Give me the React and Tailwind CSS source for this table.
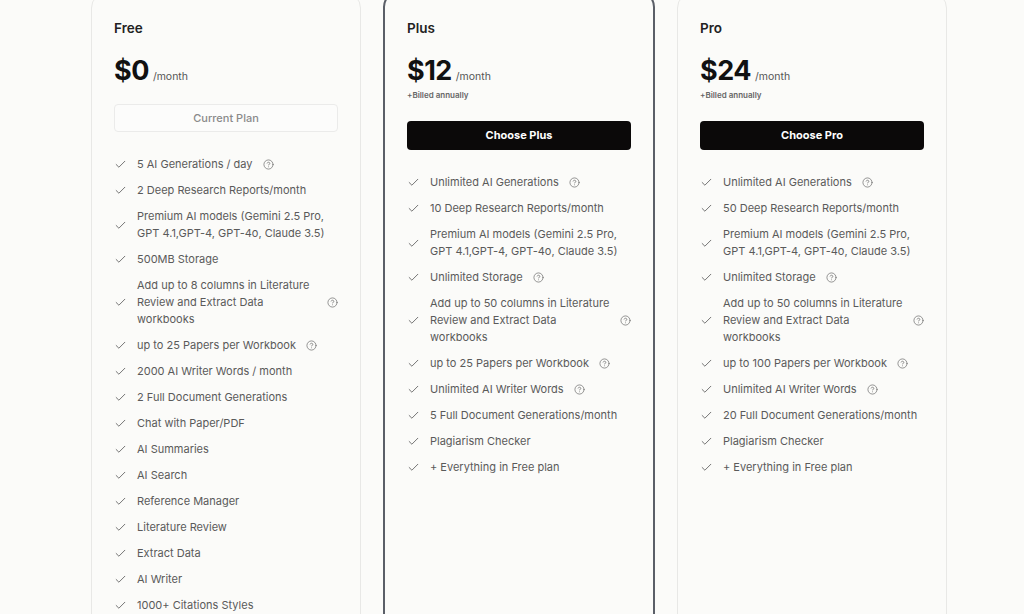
import React from "react";
import { Check, CircleHelp } from "lucide-react";

const plans = [
  {
    name: "Free",
    price: "$0",
    billed: null,
    button: "Current Plan",
    current: true,
    highlight: false,
    features: [
      ["5 AI Generations / day", true],
      ["2 Deep Research Reports/month", false],
      ["Premium AI models (Gemini 2.5 Pro, GPT 4.1,GPT-4, GPT-4o, Claude 3.5)", false],
      ["500MB Storage", false],
      ["Add up to 8 columns in Literature Review and Extract Data workbooks", true],
      ["up to 25 Papers per Workbook", true],
      ["2000 AI Writer Words / month", false],
      ["2 Full Document Generations", false],
      ["Chat with Paper/PDF", false],
      ["AI Summaries", false],
      ["AI Search", false],
      ["Reference Manager", false],
      ["Literature Review", false],
      ["Extract Data", false],
      ["AI Writer", false],
      ["1000+ Citations Styles", false],
    ],
  },
  {
    name: "Plus",
    price: "$12",
    billed: "+Billed annually",
    button: "Choose Plus",
    current: false,
    highlight: true,
    features: [
      ["Unlimited AI Generations", true],
      ["10 Deep Research Reports/month", false],
      ["Premium AI models (Gemini 2.5 Pro, GPT 4.1,GPT-4, GPT-4o, Claude 3.5)", false],
      ["Unlimited Storage", true],
      ["Add up to 50 columns in Literature Review and Extract Data workbooks", true],
      ["up to 25 Papers per Workbook", true],
      ["Unlimited AI Writer Words", true],
      ["5 Full Document Generations/month", false],
      ["Plagiarism Checker", false],
      ["+ Everything in Free plan", false],
    ],
  },
  {
    name: "Pro",
    price: "$24",
    billed: "+Billed annually",
    button: "Choose Pro",
    current: false,
    highlight: false,
    features: [
      ["Unlimited AI Generations", true],
      ["50 Deep Research Reports/month", false],
      ["Premium AI models (Gemini 2.5 Pro, GPT 4.1,GPT-4, GPT-4o, Claude 3.5)", false],
      ["Unlimited Storage", true],
      ["Add up to 50 columns in Literature Review and Extract Data workbooks", true],
      ["up to 100 Papers per Workbook", true],
      ["Unlimited AI Writer Words", true],
      ["20 Full Document Generations/month", false],
      ["Plagiarism Checker", false],
      ["+ Everything in Free plan", false],
    ],
  },
];

function Card({ plan }) {
  return (
    <div
      className={
        "shrink-0 rounded-[16px] bg-[#fbfbf9] px-[22px] pt-[25px] pb-8 min-h-[660px] " +
        (plan.highlight
          ? "w-[272px] mt-[-1px] border-2 border-[#5b5f68]"
          : "w-[270px] border border-[#e8e8e6]")
      }
    >
      <div className="text-[13.5px] leading-[20px] font-semibold text-[#222]">{plan.name}</div>
      <div className="mt-[15px] flex items-baseline h-[36px]">
        <span className="text-[27px] leading-[36px] font-bold text-[#111] tracking-[-0.5px]">{plan.price}</span>
        <span className="ml-[4px] text-[10.5px] text-[#555]">/month</span>
      </div>
      {plan.billed ? (
        <div className="mt-[1px] text-[8px] leading-[10px] font-semibold text-[#666]">{plan.billed}</div>
      ) : null}
      {plan.current ? (
        <div className="mt-[15px] h-[28px] rounded-[4px] border border-[#ebebea] bg-[#fcfcfb] flex items-center justify-center text-[11px] font-medium text-[#8a8a8a]">
          {plan.button}
        </div>
      ) : (
        <div className="mt-[21px] h-[29px] rounded-[4px] bg-[#0b0909] flex items-center justify-center text-[11px] font-bold text-white">
          {plan.button}
        </div>
      )}
      <ul className="mt-[24px] flex flex-col gap-[9px]">
        {plan.features.map(([text, help], i) => (
          <li key={i} className="flex items-center gap-[10px]">
            <Check size={13} strokeWidth={1.6} className="shrink-0 text-[#5f5f5f]" />
            <span className="text-[11px] leading-[17px] text-[#5a5a5a]">{text}</span>
            {help ? (
              <CircleHelp size={11} strokeWidth={1.6} className="shrink-0 text-[#6f6f6f]" />
            ) : null}
          </li>
        ))}
      </ul>
    </div>
  );
}

export default function App() {
  return (
    <div
      className="w-[1024px] h-[614px] overflow-hidden bg-[#fbfbf9]"
      style={{ fontFamily: "Inter, 'Noto Sans', sans-serif" }}
    >
      <div className="mt-[-8px] pl-[91px] flex gap-[22px]">
        {plans.map((p) => (
          <Card key={p.name} plan={p} />
        ))}
      </div>
    </div>
  );
}
